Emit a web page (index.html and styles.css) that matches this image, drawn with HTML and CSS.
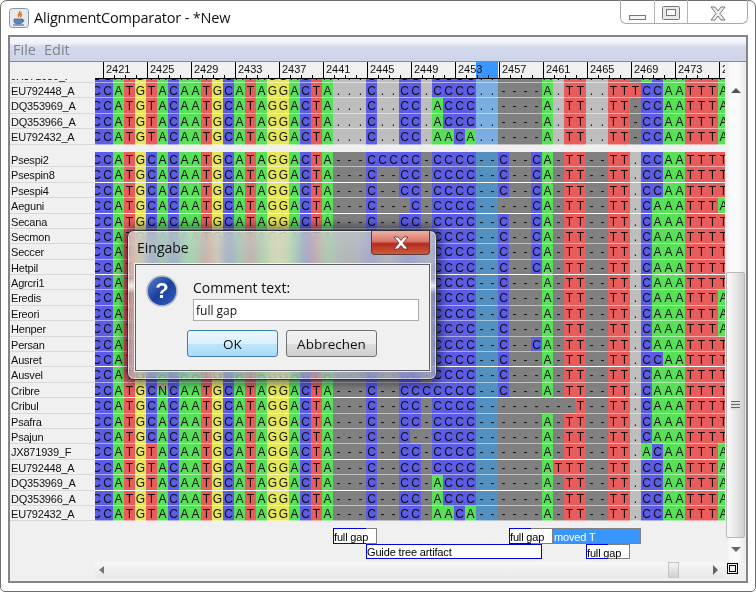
FILE: index.html
```html
<!DOCTYPE html>
<html lang="en">
<head>
    <meta charset="UTF-8">
    <meta name="viewport" content="width=device-width, initial-scale=1.0">
    <title>AlignmentComparator - *New</title>
    <link rel="stylesheet" href="styles.css">
</head>
<body>

    <div class="window">
        <div class="titlebar">
            <svg class="appIcon" width="20" height="20" viewBox="0 0 20 20">
                <rect x="0.5" y="0.5" width="19" height="19" rx="3" fill="#e6e9ee" stroke="#8d95a0"/>
                <path d="M10.5 3c1.500 2-2.500 3-1 5.500.5-1.500 3-2.500 2.500-4.500M12.500 6c.5 1.500-1.500 2-1 3.500" fill="none" stroke="#e0761c" stroke-width="1.300"/>
                <path d="M5 11h8.500v2.500c0 1.500-1.500 2.500-4.200 2.500S5 15 5 13.500zM13.500 11.500c2 0 2 2.500-.5 2.500" fill="#5c86b4" stroke="#3a5f8c" stroke-width="0.700"/>
                <path d="M4 17h11" stroke="#3a5f8c" stroke-width="1"/>
            </svg>
            <span class="appTitle">AlignmentComparator - *New</span>
            <div class="winButtons">
                <div class="winBtn winMin">
                    <svg width="18" height="6" viewBox="0 0 18 6"><rect x="0.500" y="0.500" width="16" height="4" fill="#f6f6f6" stroke="#777"/></svg>
                </div>
                <div class="winBtn winMax">
                    <svg width="18" height="14" viewBox="0 0 18 14"><rect x="0.500" y="0.500" width="17" height="13" rx="1" fill="#e8e8e8" stroke="#777"/><rect x="4.500" y="3.500" width="9" height="6" fill="#f8f8f8" stroke="#777"/></svg>
                </div>
                <div class="winBtn winClose">
                    <svg width="16" height="15" viewBox="0 0 16 15"><path d="M1 1h4l3 4 3-4h4l-5 6.500 5 6.500h-4l-3-4-3 4H1l5-6.500z" fill="#eee" stroke="#777"/></svg>
                </div>
            </div>
        </div>

        <div class="frame">
            <div class="menubar">
                <span class="menuItem">File</span>
                <span class="menuItem">Edit</span>
            </div>

            <div class="workspace">
                <div class="main">
                    <div class="rulerRow">
                        <div class="rulerCorner"></div>
                        <div class="ruler" id="ruler"></div>
                    </div>

                    <div class="rows">
                        <div class="section sectionTop" id="topRows"></div>
                        <div class="section sectionMain" id="mainRows"></div>
                        <div class="notes" id="notes"></div>
                    </div>

                    <div class="hscroll">
                        <div class="hTrack">
                            <span class="arrow arrowLeft"></span>
                            <span class="hThumb"></span>
                            <span class="arrow arrowRight"></span>
                        </div>
                    </div>
                </div>

                <div class="vscroll">
                    <div class="vTrack">
                        <span class="arrow arrowUp"></span>
                        <div class="vThumb"><span class="grip"></span></div>
                        <span class="arrow arrowDown"></span>
                    </div>
                    <div class="corner"><span class="cornerIcon"></span></div>
                </div>
            </div>
        </div>

        <div class="dialog">
            <div class="dialogHead">
                <span class="dialogTitle">Eingabe</span>
                <div class="dialogClose">
                    <svg width="18" height="14" viewBox="0 0 18 14"><path d="M2 1h4l3 3.500L12 1h4l-5 6 5 6h-4L9 9.500 6 13H2l5-6z" fill="#fff" stroke="#6b2a22" stroke-width="0.800"/></svg>
                </div>
            </div>
            <div class="dialogBody">
                <div class="prompt">
                    <svg class="questionIcon" width="32" height="32" viewBox="0 0 32 32">
                        <defs>
                            <linearGradient id="qBlue" x1="0" y1="0" x2="1" y2="1">
                                <stop offset="0" stop-color="#5a86d6"/>
                                <stop offset="0.500" stop-color="#1c3f9c"/>
                                <stop offset="1" stop-color="#2f62c4"/>
                            </linearGradient>
                        </defs>
                        <circle cx="16" cy="16" r="15" fill="url(#qBlue)" stroke="#b9bec6" stroke-width="1.600"/>
                        <text x="16" y="23" text-anchor="middle" class="questionMark">?</text>
                    </svg>
                    <div class="promptFields">
                        <label class="promptLabel" for="comment">Comment text:</label>
                        <input class="promptInput" id="comment" type="text" value="full gap">
                    </div>
                </div>
                <div class="dialogButtons">
                    <button class="btn btnDefault" type="button">OK</button>
                    <button class="btn" type="button">Abbrechen</button>
                </div>
            </div>
        </div>
    </div>

    <script src="script.js"></script>
</body>
</html>
```

FILE: styles.css
```css
* {
    box-sizing: border-box;
}

html, body {
    margin: 0;
    padding: 0;
    height: 100%;
    overflow: hidden;
}

body {
    font-family: 'Liberation Sans', Arial, sans-serif;
    background-color: #fff;
}

.window {
    position: relative;
    width: 756px;
    height: 592px;
    padding: 0 7px;
    background-color: #fff;
    border: 1px solid #6f6f6f;
    border-radius: 7px 7px 5px 5px;
}

/* title bar */
.titlebar {
    display: flex;
    align-items: flex-start;
    height: 34px;
}

.appIcon {
    margin: 7px 5px 0 1px;
}

.appTitle {
    margin-top: 6px;
    font-family: 'Open Sans', sans-serif;
    font-size: 14.500px;
    letter-spacing: -0.2px;
    line-height: 22px;
    color: #111;
}

.winButtons {
    display: flex;
    margin-left: auto;
    height: 24px;
    margin-top: -1px;
    border: 1px solid #a9a9a9;
    border-top: 0;
    border-radius: 0 0 6px 6px;
    width: 128px;
}

.winBtn {
    display: flex;
    align-items: flex-start;
    justify-content: center;
}

.winMin {
    width: 34px;
    padding-top: 15px;
    border-right: 1px solid #b5b5b5;
}

.winMax {
    width: 33px;
    padding-top: 6px;
    border-right: 1px solid #b5b5b5;
}

.winClose {
    flex: 1;
    padding-top: 6px;
}

/* application frame */
.frame {
    display: flex;
    flex-direction: column;
    width: 740px;
    height: 548px;
    border: 2px solid #858585;
    border-top-width: 2px;
    background-color: #f0f0f0;
}

.menubar {
    display: flex;
    gap: 8px;
    flex: none;
    height: 25px;
    padding: 3px 0 0 3px;
    border-bottom: 1px solid #8a8a8a;
    background: linear-gradient(#f6f8fc 0, #eef1f8 25%, #d3daec 40%, #ccd4e9 100%);
}

.menuItem {
    font-family: 'Open Sans', sans-serif;
    font-size: 14.500px;
    line-height: 20px;
    color: #80858f;
}

.workspace {
    display: flex;
    flex: 1;
    min-height: 0;
}

.main {
    width: 715px;
    flex: none;
}

/* ruler */
.rulerRow {
    display: flex;
    height: 17px;
}

.rulerCorner {
    width: 85px;
    flex: none;
}

.ruler {
    display: flex;
    width: 630px;
    padding-left: 8px;
    overflow: hidden;
    border-bottom: 1px solid #000;
    background:
        repeating-linear-gradient(90deg, #000 0, #000 1px, transparent 1px, transparent 11px) 8px 100% / 100% 3px no-repeat,
        linear-gradient(#3a96ff, #3a96ff) 381px 0 / 22px 100% no-repeat;
}

.mark {
    flex: none;
    width: 44px;
    padding-left: 2px;
    border-left: 1px solid #000;
    font-size: 11px;
    line-height: 14px;
    color: #111;
}

/* sequence rows */
.rows {
    height: 483px;
    overflow: hidden;
}

.row {
    display: flex;
    height: 15.4px;
}

.sectionTop .row:first-child {
    margin-top: -11.4px;
}

.sectionMain {
    margin-top: 7.4px;
}

.name {
    flex: none;
    width: 85px;
    padding: 1px 0 0 1px;
    border-bottom: 1px solid #d8d8d8;
    font-size: 11px;
    letter-spacing: -0.2px;
    line-height: 14px;
    color: #111;
}

.cells {
    display: flex;
    flex: none;
    width: 630px;
    overflow: hidden;
}

.cell {
    flex: none;
    width: 11px;
    padding-top: 1px;
    border-bottom: 1px solid rgba(255, 255, 255, 0.5);
    font-size: 12px;
    line-height: 14px;
    text-align: center;
    color: #111;
}

.cell:first-child {
    margin-left: -4px;
}

.row.bright .cell {
    border-bottom-color: #fff;
}

.baseA { background-color: #58e058; }
.baseC { background-color: #5c5ce4; }
.baseG { background-color: #e6e65c; }
.baseT { background-color: #e85c5c; }
.baseN { background: linear-gradient(#a8a878 45%, #58e058 45%); }
.gap { background-color: #808080; }
.dot { background-color: #bebebe; }
.gap.selected { background-color: #5190bf; }
.dot.selected { background-color: #7aaee0; }

/* annotations under the alignment */
.notes {
    display: grid;
    grid-template-columns: repeat(58, 11px);
    grid-template-rows: 16px 15px;
    height: 40px;
    padding: 7px 0 0 81px;
}

.note {
    position: relative;
    padding-left: 0;
    border: 1px solid #808080;
    border-left-color: #0000e0;
    background-color: #fff;
    font-size: 11px;
    letter-spacing: -0.15px;
    line-height: 16px;
    white-space: nowrap;
    color: #000;
}

/* blue part of the outline, the span the comment was first made on */
.note::before {
    content: "";
    position: absolute;
    left: -1px;
    top: -1px;
    bottom: -1px;
    width: 22px;
    border-top: 1px solid #0000e0;
    border-bottom: 1px solid #0000e0;
}

.noteWide::before {
    width: 33px;
}

.noteAll {
    border-color: #0000e0;
    line-height: 15px;
}

.noteMoved {
    border-color: #808080;
    background-color: #3a96ff;
    color: #fff;
}

.noteMoved::before {
    display: none;
}

/* scrollbars */
.hscroll {
    display: flex;
    justify-content: flex-end;
    height: 16px;
}

.hTrack {
    display: flex;
    align-items: center;
    width: 630px;
    background: linear-gradient(#f6f6f6, #e8e8e8);
}

.hThumb {
    width: 11px;
    height: 16px;
    margin-left: 565px;
    border: 1px solid #c4c4c4;
    background: linear-gradient(#f4f4f4, #d2d2d2);
}

.arrow {
    flex: none;
    width: 0;
    height: 0;
    border-style: solid;
    border-color: transparent;
}

.arrowLeft {
    margin-left: 4px;
    border-width: 4px 5px 4px 0;
    border-right-color: #777;
    margin-right: -1px;
}

.arrowRight {
    margin-left: 34px;
    border-width: 5px 0 5px 5px;
    border-left-color: #666;
}

.vscroll {
    display: flex;
    flex-direction: column;
    width: 21px;
    flex: none;
}

.vTrack {
    display: flex;
    flex-direction: column;
    align-items: center;
    height: 500px;
    padding-top: 26px;
    background: linear-gradient(90deg, #f0f0f0 0, #f0f0f0 3px, #f8f8f8 4px, #fbfbfb 60%, #e8e8e8 100%);
}

.arrowUp {
    border-width: 0 5px 5px 5px;
    border-bottom-color: #555;
}

.vThumb {
    display: flex;
    align-items: center;
    justify-content: center;
    width: 19px;
    height: 266px;
    margin-top: 179px;
    margin-right: 1px;
    border: 1px solid #b8b8b8;
    border-radius: 2px;
    background: linear-gradient(90deg, #fafafa, #e8e8e8 50%, #cfcfcf);
}

.grip {
    width: 9px;
    height: 9px;
    background: repeating-linear-gradient(#666 0, #666 1px, #ddd 1px, #ddd 3px);
}

.arrowDown {
    margin-top: 9px;
    border-width: 5px 5px 0 5px;
    border-top-color: #666;
}

.corner {
    height: 16px;
    padding: 1px 0 0 2px;
}

.cornerIcon {
    display: block;
    width: 11px;
    height: 11px;
    border: 1px solid #000;
    box-shadow: inset 0 0 0 1px #f0f0f0, inset 0 0 0 2px #000;
}

/* modal dialog, sits over the alignment */
.dialog {
    position: absolute;
    left: 126px;
    top: 229px;
    display: flex;
    flex-direction: column;
    width: 310px;
    height: 150px;
    padding: 0 6px 8px 7px;
    border: 1px solid #2f3338;
    border-radius: 7px;
    background: linear-gradient(rgba(225, 232, 240, 0.6), rgba(225, 232, 240, 0.45) 32%, rgba(255, 255, 255, 0.85) 37%, rgba(190, 200, 220, 0.4) 42%, rgba(190, 200, 225, 0.45));
    backdrop-filter: blur(6px) saturate(0.7);
    box-shadow: 0 0 10px 3px rgba(0, 0, 30, 0.55), inset 0 0 0 1px rgba(255, 255, 255, 0.6);
}

.dialogHead {
    display: flex;
    flex: none;
    height: 33px;
}

.dialogTitle {
    padding: 6px 0 0 2px;
    font-family: 'Open Sans', sans-serif;
    font-size: 14px;
    line-height: 22px;
    color: #111;
}

.dialogClose {
    display: flex;
    align-items: center;
    justify-content: center;
    width: 59px;
    height: 24px;
    margin-left: auto;
    border: 1px solid #5b3a38;
    border-top: 0;
    border-radius: 0 0 4px 4px;
    background: linear-gradient(#eeb0a6 0, #d9766a 45%, #b52c1c 55%, #cc5a3e 100%);
}

.dialogBody {
    flex: 1;
    padding: 15px 10px 0;
    border: 1px solid #5d6066;
    box-shadow: 0 0 0 1px rgba(255, 255, 255, 0.8);
    background-color: #f0f0f0;
}

.prompt {
    display: flex;
    gap: 15px;
}

.questionIcon {
    flex: none;
    margin-top: -5px;
}

.questionMark {
    font-family: 'Liberation Sans', Arial, sans-serif;
    font-size: 22px;
    font-weight: bold;
    fill: #fff;
}

.promptFields {
    display: flex;
    flex-direction: column;
}

.promptLabel {
    height: 19px;
    font-family: 'Open Sans', sans-serif;
    font-size: 14px;
    line-height: 15px;
    color: #111;
}

.promptInput {
    width: 226px;
    height: 22px;
    margin: 0;
    padding: 0 2px;
    border: 1px solid #ababab;
    border-radius: 0;
    background-color: #fff;
    font-family: 'Open Sans', sans-serif;
    font-size: 12px;
    color: #111;
}

.dialogButtons {
    display: flex;
    gap: 8px;
    margin: 9px 0 0 41px;
}

.btn {
    width: 91px;
    height: 27px;
    padding: 0;
    border: 1px solid #707070;
    border-radius: 3px;
    background: linear-gradient(#f2f2f2, #ebebeb 50%, #dddddd 52%, #cfcfcf);
    font-family: 'Open Sans', sans-serif;
    font-size: 13.500px;
    color: #111;
}

.btnDefault {
    border-color: #3c7fb1;
    background: linear-gradient(#eaf6fd, #d9f0fc 50%, #bee6fd 52%, #a7d9f5);
}
```

FILE: script.js
```js
// alignment data, one string per row. Spaces are only for reading, they get stripped.
var PREFIX_T = 'CCATGTACAATGCATAGGACTA';
var PREFIX_C = 'CCATGCACAATGCATAGGACTA';

var topRows = [
    ['JX871939_F', PREFIX_T + '... C .. CC . CCCC .. ---- A . TT .. TT - AC AA TTT A'],
    ['EU792448_A', PREFIX_T + '... C .. CC . CCCC .. ---- A . TT .. TT T CC AA TTT A'],
    ['DQ353969_A', PREFIX_T + '... C .. CC . ACCC .. ---- A . TT .. TT - CC AA TTT A'],
    ['DQ353966_A', PREFIX_T + '... C .. CC . ACCC .. ---- A . TT .. TT - CC AA TTT A'],
    ['EU792432_A', PREFIX_T + '... C .. CC . AACA .. ---- A . TT .. TT - CC AA TTT A']
];

var mainRows = [
    ['Psespi2', PREFIX_C + '--- C CC CC - CCCC -- C--C A - TT -- TT . CC AA TTT T'],
    ['Psespin8', PREFIX_C + '--- C -- CC - CCCC -- C--C A - TT -- TT . CC AA TTT T'],
    ['Psespi4', PREFIX_C + '--- C -- CC - CCCC -- C--C A - TT -- TT . CC AA TTT T'],
    ['Aeguni', PREFIX_C + '--- C -- -C - CCCC -- ---C A - TT -- TT . C AAA TTT A'],
    ['Secana', PREFIX_C + '--- C -- CC - CCCC -- C--C A - TT -- TT . C AAA TTT T'],
    ['Secmon', PREFIX_C + '--- C -- CC - CCCC -- C--C A - TT -- TT . C AAA TTT T'],
    ['Seccer', PREFIX_C + '--- C -- CC - CCCC -- C--C A - TT -- TT . C AAA TTT T'],
    ['Hetpil', PREFIX_C + '--- C -- CC - CCCC -- C--C A - TT -- TT . C AAA TTT T'],
    ['Agrcri1', PREFIX_C + '--- C -- CC - CCCC -- C--- A - TT -- TT . C AAA TTT T'],
    ['Eredis', PREFIX_C + '--- C -- CC - CCCC -- C--- A - TT -- TT . C AAA TTT A'],
    ['Ereori', PREFIX_C + '--- C -- CC - CCCC -- C--- A - TT -- TT . C AAA TTT A'],
    ['Henper', PREFIX_C + '--- C -- CC - CCCC -- C--- A - TT -- TT . C AAA TTT A'],
    ['Persan', PREFIX_C + '--- C -- CC - CCCC -- C--C A - TT -- TT . C AAA TTT T'],
    ['Ausret', PREFIX_C + '--- C -- CC - CCCC -- C--- A - TT -- TT . CC AA TTT T'],
    ['Ausvel', PREFIX_C + '--- C -- CC - CCCC -- C--- A - TT -- TT . C AAA TTT T'],
    ['Cribre', 'CCATGCNCAATGCATAGGACTA' + '--- C -- CC C CCCC -- C--- A - TT -- TT . C AAA TTT T'],
    ['Cribul', PREFIX_C + '--- C -- CC - CCCC -- ---- - - -T -- TT . C AAA TTT T'],
    ['Psafra', PREFIX_C + '--- C -- CC - CCCC -- ---- A - TT -- TT . C AAA TTT T'],
    ['Psajun', PREFIX_C + '--- C -- C- - CCCC -- ---- A - TT -- TT . C AAA TTT T'],
    ['JX871939_F', PREFIX_T + '--- C -- CC - CCCC -- ---- A - TT -- TT . AC AA TTT A'],
    ['EU792448_A', PREFIX_T + '--- C -- CC - CCCC -- ---- A T TT -- TT . CC AA TTT A'],
    ['DQ353969_A', PREFIX_T + '--- C -- CC - ACCC -- ---- A - TT -- TT . CC AA TTT A'],
    ['DQ353966_A', PREFIX_T + '--- C -- CC - ACCC -- ---- A - TT -- TT . CC AA TTT A'],
    ['EU792432_A', PREFIX_T + '--- C -- CC - AACA -- ---- A - TT -- TT . CC AA TTT A']
];

// rows whose bottom line shows as full white
var brightRows = [1, 3, 7, 13, 15, 19, 21];

// comment labels: text, first column, last column + 1, track, kind
var notes = [
    ['full gap', 22, 26, 1, 'noteWide'],
    ['Guide tree artifact', 25, 41, 2, 'noteAll'],
    ['full gap', 38, 42, 1, ''],
    ['moved T', 42, 50, 1, 'noteMoved'],
    ['full gap', 45, 49, 2, '']
];

var SELECTED_FROM = 35;
var SELECTED_TO = 36;

function cellClass(ch, col) {
    var name = 'cell';
    if (ch === '-') {
        name += ' gap';
    } else if (ch === '.') {
        name += ' dot';
    } else {
        name += ' base' + ch;
    }
    if (col >= SELECTED_FROM && col <= SELECTED_TO) {
        name += ' selected';
    }
    return name;
}

function addRows(container, rows, brights) {
    for (var i = 0; i < rows.length; i++) {
        var row = document.createElement('div');
        row.className = 'row';
        if (brights.indexOf(i) >= 0) {
            row.className += ' bright';
        }

        var name = document.createElement('div');
        name.className = 'name';
        name.textContent = rows[i][0];
        row.appendChild(name);

        var cells = document.createElement('div');
        cells.className = 'cells';
        var seq = rows[i][1].replace(/ /g, '');
        for (var c = 0; c < seq.length; c++) {
            var cell = document.createElement('span');
            cell.className = cellClass(seq[c], c);
            cell.textContent = seq[c];
            cells.appendChild(cell);
        }
        row.appendChild(cells);
        container.appendChild(row);
    }
}

addRows(document.getElementById('topRows'), topRows, []);
addRows(document.getElementById('mainRows'), mainRows, brightRows);

var ruler = document.getElementById('ruler');
for (var n = 2421; n <= 2477; n += 4) {
    var mark = document.createElement('span');
    mark.className = 'mark';
    mark.textContent = n;
    ruler.appendChild(mark);
}

var notesBox = document.getElementById('notes');
for (var k = 0; k < notes.length; k++) {
    var note = document.createElement('div');
    note.className = 'note ' + notes[k][4];
    note.textContent = notes[k][0];
    note.style.gridColumn = (notes[k][1] + 1) + ' / ' + (notes[k][2] + 1);
    note.style.gridRow = notes[k][3];
    notesBox.appendChild(note);
}
```
